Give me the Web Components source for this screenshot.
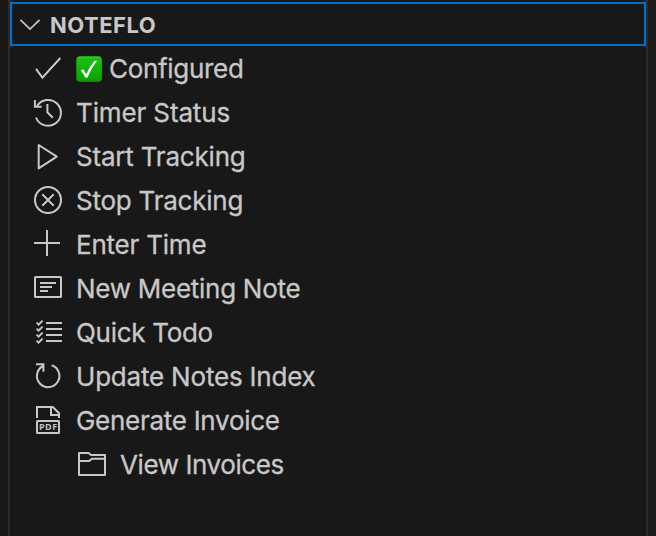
<!DOCTYPE html>
<html lang="en"><head><meta charset="utf-8"><title>NoteFlo</title>
<style>html,body{margin:0;height:100%;background:#181818;overflow:hidden}</style></head>
<body>
<side-panel>
<panel-header>NOTEFLO</panel-header>
<tree-row icon="check" status="ok" style="letter-spacing:-.31px">Configured</tree-row>
<tree-row icon="history" style="letter-spacing:-.13px">Timer Status</tree-row>
<tree-row icon="play" style="letter-spacing:-.2px">Start Tracking</tree-row>
<tree-row icon="stop" style="letter-spacing:-.23px">Stop Tracking</tree-row>
<tree-row icon="add" style="letter-spacing:-.22px">Enter Time</tree-row>
<tree-row icon="note" style="letter-spacing:-.27px">New Meeting Note</tree-row>
<tree-row icon="list" style="letter-spacing:-.3px">Quick Todo</tree-row>
<tree-row icon="refresh" style="letter-spacing:-.2px">Update Notes Index</tree-row>
<tree-row icon="pdf" style="letter-spacing:-.28px">Generate Invoice</tree-row>
<tree-row icon="folder" level="2" style="letter-spacing:-.41px">View Invoices</tree-row>
</side-panel>
<script>
const ICONS={
check:'<path d="M4 15.8L10.4 24.6L28.3 5"/>',
history:'<path d="M5 9.2A12.9 12.9 0 1 1 4 20.5M2.9 3V9.7H9.6M15.4 7V15.3L20.8 20.7"/>',
play:'<path d="M6.7 4V27.4L24.8 15.7Z" stroke-linejoin="round"/>',
stop:'<circle cx="16" cy="15" r="13"/><path d="M10.3 9.3L21.7 20.7M21.7 9.3L10.3 20.7"/>',
add:'<path d="M15 1V27M2 14H28"/>',
note:'<rect x="3" y="4" width="26" height="20" rx=".6"/><path d="M8 10H24M8 14H20M8 18H16"/>',
list:'<path d="M14 6H30M14 12H30M14 18H30M14 24H30"/><path stroke-width="1.9" d="M4.6 5.6L6.6 7.6L10.6 3.6M4.6 11.6L6.6 13.6L10.6 9.6M4.6 17.6L6.6 19.6L10.6 15.6M4.6 23.6L6.6 25.6L10.6 21.6"/>',
refresh:'<path d="M19.7 4.3A11.2 11.2 0 1 1 11 5L11.5 4.4M4 3.2H11.4V10.7"/>',
pdf:'<path d="M5 13V2H20.8L27 8.2V13M19 2V10H28"/><rect x="5" y="16" width="22" height="12" rx=".5"/><text x="7" y="25.2" textLength="18.2" font-family="Open Sans,sans-serif" font-size="9" font-weight="700" fill="currentColor" stroke="none" letter-spacing="0">PDF</text>',
folder:'<path d="M3 4H12.5L15 6H29V26H3ZM3 12H13.2L16 9.7H29" stroke-linejoin="round"/>'
};
customElements.define('side-panel',class extends HTMLElement{constructor(){super();this.attachShadow({mode:'open'}).innerHTML=`
<style>:host{display:flex;height:536px;width:656px;box-sizing:border-box;background:#181818;color:#c8c8c8;font-family:Inter,sans-serif}
.gutter{width:8px}.body{width:636px;padding-top:2px;border:solid #2b2b2b;border-width:0 2px;display:flex;flex-direction:column}.editor{flex:1;background:#1d1d1d}</style>
<div class="gutter"></div><div class="body"><slot></slot></div><div class="editor"></div>`}});
customElements.define('panel-header',class extends HTMLElement{constructor(){super();this.attachShadow({mode:'open'}).innerHTML=`
<style>:host{display:flex;align-items:center;box-sizing:border-box;height:44px;margin-bottom:1px;border:2px solid #0070cf;padding-left:7px;font-size:22px;font-weight:700;line-height:44px;letter-spacing:.5px}
svg{fill:none;stroke:currentColor;stroke-width:1.7;margin-right:8px}span{padding-top:2px}</style>
<svg width="23" height="20"><path d="M1.5 5.8L11 15L20.5 5.8"/></svg><span><slot></slot></span>`}});
customElements.define('tree-row',class extends HTMLElement{
constructor(){super();this.attachShadow({mode:'open'})}
connectedCallback(){const ok=this.getAttribute('status')==='ok';
this.shadowRoot.innerHTML=`
<style>:host{display:flex;align-items:center;height:44px;padding-left:22px;gap:12px;font-size:26px;line-height:44px;white-space:pre}
:host([level="2"]){padding-left:66px}
span{-webkit-text-stroke:.3px currentColor}
.icon{fill:none;stroke:currentColor;stroke-width:2;flex:none}.badge{margin-right:-6px;flex:none}</style>
<svg class="icon" width="32" height="32" viewBox="0 0 32 32">${ICONS[this.getAttribute('icon')]}</svg>
${ok?`<svg class="badge" width="27" height="27" viewBox="0 0 27 27"><defs><linearGradient id="g" x2="0" y2="1"><stop stop-color="#43c43b"/><stop offset=".12" stop-color="#19bd12"/><stop offset=".9" stop-color="#0aa800"/><stop offset="1" stop-color="#078500"/></linearGradient></defs><rect x=".3" y=".3" width="25.6" height="25.6" rx="4" fill="url(#g)"/><path d="M4.8 14.4L7.2 13.3L10.3 18.2C12.6 12.9 15.4 8.3 18.8 4.7H21.2C17.2 9.7 14 15.2 11.6 21.5H9.2C7.9 18.7 6.6 16.6 4.8 14.4Z" fill="#fff"/></svg>`:''}
<span><slot></slot></span>`}});
</script></body></html>
